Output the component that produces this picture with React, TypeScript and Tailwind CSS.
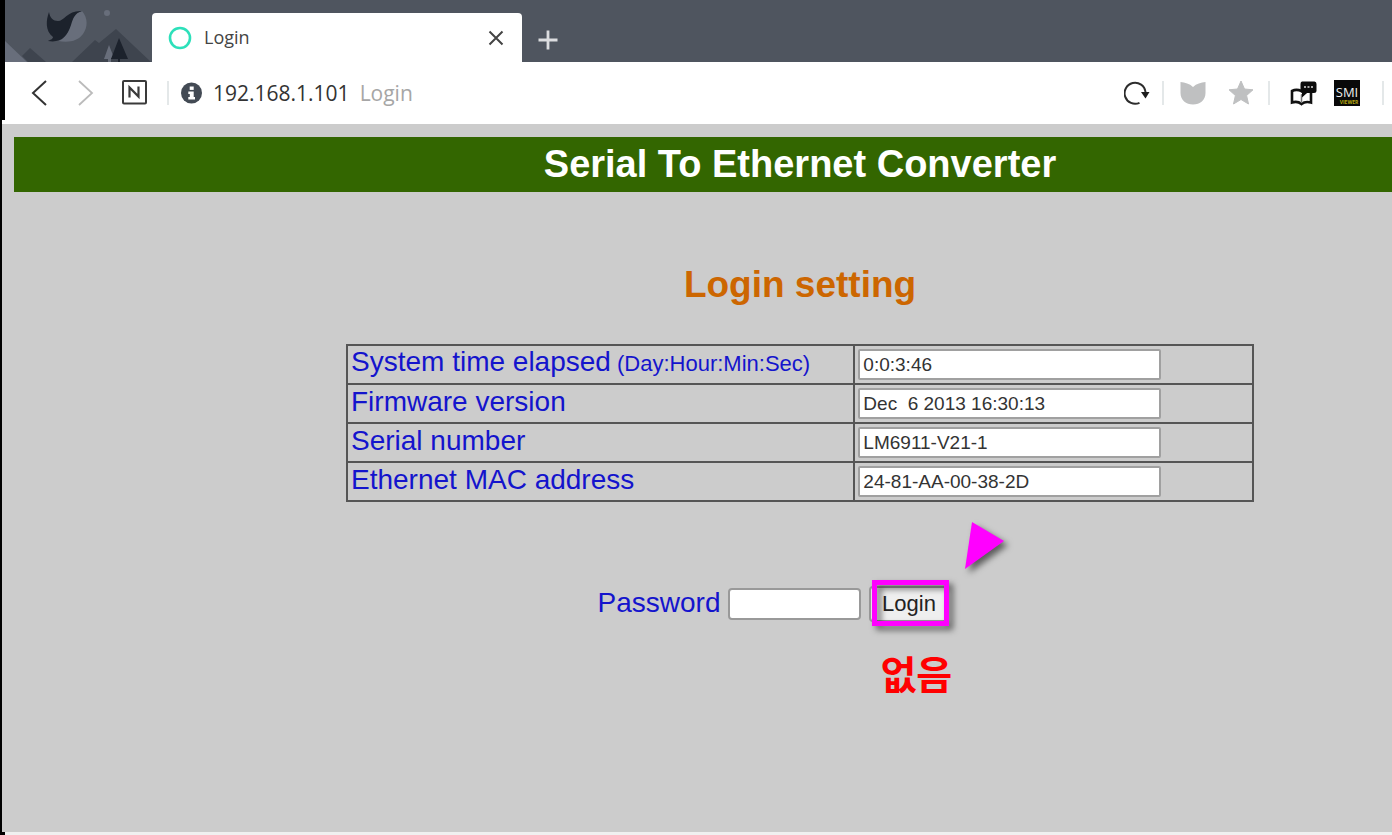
import React, { useState } from 'react';

interface InfoRow {
  id: string;
  label: string;
  hint?: string;
  value: string;
}

const INFO_ROWS: InfoRow[] = [
  { id: 'elapsed', label: 'System time elapsed', hint: '(Day:Hour:Min:Sec)', value: '0:0:3:46' },
  { id: 'firmware', label: 'Firmware version', value: 'Dec  6 2013 16:30:13' },
  { id: 'serial', label: 'Serial number', value: 'LM6911-V21-1' },
  { id: 'mac', label: 'Ethernet MAC address', value: '24-81-AA-00-38-2D' },
];

const Divider = () => <span className="h-6 w-0.5 shrink-0 bg-[#e4e8e9]" />;

// Whale browser skin shown left of the first tab
const SkinArt = () => (
  <svg className="h-full w-[147px] shrink-0" viewBox="5 0 147 62" aria-hidden="true">
    <path d="M5 41 L27 62 H5Z" fill="#686e7b" />
    <path d="M22 56 L30 48 L46 62 H28Z" fill="#3e444e" />
    <path d="M72 62 L95 40 L99 43 L116 29 L151 62Z" fill="#3e444e" />
    <circle cx="107" cy="13" r="3" fill="#686e7b" />
    <path d="M82 11 C88 18 88 27 83 34 C78 41 69 43 58 41 C66 39 69 29 72 21 C74 15 77 12 82 11Z" fill="#686e7b" />
    <path d="M49 12 C50 18 53 21 58 21 C64 21 68 10 82 11 C75 13 73 18 71 25 C67 37 61 43 48 41 C50 40 53 39 53 37 C45 31 46 20 49 12Z" fill="#1c222c" />
    <path d="M109 45 L114 58 H111 V62 H108 V59 H104Z" fill="#686e7b" />
    <path d="M119 38 L128 59 H120 V62 H118 V59 H111Z" fill="#1c222c" />
  </svg>
);

const TabStrip = () => (
  <div className="flex h-[62px] items-end border-l-[5px] border-black bg-[#4f555f]">
    <SkinArt />
    <div className="flex h-[49px] w-[370px] items-center rounded-t bg-white pr-4 pl-4">
      <svg className="h-6 w-6" viewBox="0 0 24 24" fill="none" stroke="#2de0ba" strokeWidth="2.6" aria-hidden="true">
        <circle cx="12" cy="12" r="10" />
      </svg>
      <span className="ml-3 flex-1 text-[18px] text-[#444]">Login</span>
      <button type="button" aria-label="Close tab" className="flex h-5 w-5 items-center justify-center">
        <svg className="h-4 w-4" viewBox="0 0 16 16" stroke="#444" strokeWidth="2" aria-hidden="true">
          <path d="M1.5 1.5 L14.5 14.5 M14.5 1.5 L1.5 14.5" />
        </svg>
      </button>
    </div>
    <button type="button" aria-label="New tab" className="mb-3 ml-4 flex h-5 w-5 items-center justify-center">
      <svg className="h-5 w-5" viewBox="0 0 20 20" stroke="#dcdde0" strokeWidth="2.8" aria-hidden="true">
        <path d="M10 .5 V19.5 M.5 10 H19.5" />
      </svg>
    </button>
  </div>
);

const Toolbar = () => (
  <div className="flex h-[58px] items-center border-l-[5px] border-black bg-white pt-1 pr-2">
    <button type="button" aria-label="Back" className="ml-6">
      <svg className="h-7 w-5" viewBox="0 0 20 28" fill="none" stroke="#333" strokeWidth="2" aria-hidden="true">
        <path d="M17 2 L4 14 L17 26" />
      </svg>
    </button>
    <button type="button" aria-label="Forward" className="ml-7">
      <svg className="h-7 w-5" viewBox="0 0 20 28" fill="none" stroke="#bbb" strokeWidth="1.8" aria-hidden="true">
        <path d="M2 2 L15 14 L2 26" />
      </svg>
    </button>
    <button type="button" aria-label="Home" className="ml-6">
      <svg className="h-[26px] w-[26px]" viewBox="0 0 26 26" fill="none" stroke="#3a3a3a" strokeWidth="2" aria-hidden="true">
        <rect x="2" y="1" width="23" height="22.5" rx="1" />
        <path d="M8.5 17.5 V7.5 L17.5 16.5 V6.5" strokeWidth="2.2" />
      </svg>
    </button>
    <div className="ml-5 flex min-w-0 flex-1 items-center">
      <Divider />
      <svg className="ml-3 h-[22px] w-[22px]" viewBox="0 0 22 22" aria-hidden="true">
        <circle cx="10.5" cy="11" r="10.5" fill="#434a54" />
        <rect x="8.7" y="4.5" width="4" height="3.4" fill="#fff" />
        <path d="M7.3 9.5 H12.7 V15 H14 V17.5 H7.3 V15 H8.8 V12 H7.3Z" fill="#fff" />
      </svg>
      <div className="ml-2.5 flex gap-2.5 pt-0.5 text-[21px]">
        <span className="text-[#333]">192.168.1.101</span>
        <span className="text-[#a6a6a6]">Login</span>
      </div>
    </div>
    <div className="flex items-center">
      <button type="button" aria-label="Reload">
        <svg className="h-[26px] w-[26px]" viewBox="0 0 26 26" fill="none" aria-hidden="true">
          <path d="M15.5 22.8 A10.5 10.5 0 1 1 21.5 12" stroke="#2d2d2d" strokeWidth="2" />
          <path d="M17 12 H25.5 L21.5 18.5Z" fill="#1d1d1d" />
        </svg>
      </button>
      <span className="ml-3 flex"><Divider /></span>
      <button type="button" aria-label="Tracking protection" className="ml-4">
        <svg className="h-[26px] w-[26px]" viewBox="0 0 26 26" fill="#bfc0c1" aria-hidden="true">
          <path d="M.5 2 C5 2.5 9.5 3.5 13 7 C16.5 3.5 21 2.5 25.5 2 V13 C25.5 20 20 24.5 13 24.5 S.5 20 .5 13Z" />
        </svg>
      </button>
      <button type="button" aria-label="Bookmark" className="ml-[22px]">
        <svg className="h-[26px] w-[26px]" viewBox="0 0 26 26" fill="#bfc0c1" stroke="#bfc0c1" strokeLinejoin="round" aria-hidden="true">
          <path d="M13 1 L16.5 9 L25 9.8 L18.6 15.5 L20.5 24 L13 19.5 L5.5 24 L7.4 15.5 L1 9.8 L9.5 9Z" />
        </svg>
      </button>
      <span className="ml-3.5 flex"><Divider /></span>
      <button type="button" aria-label="Dictionary" className="ml-5">
        <svg className="h-[26px] w-[27px]" viewBox="0 0 27 26" fill="none" aria-hidden="true">
          <path d="M11.5 11 C8 9.5 5 9.5 2 11 V22.5 C5 21.5 8.5 21.5 11.5 24 C14.5 21.5 17.5 21.5 21 22.5 V13" stroke="#111" strokeWidth="2.6" />
          <path d="M11.5 23 V15 L17 12" stroke="#777" strokeWidth="1.5" />
          <path d="M12 1.5 H24.5 Q26.5 1.5 26.5 4 V11 Q26.5 13 24 13 H17 L12 17.5 V13 Q10.5 13 10.5 11 V4 Q10.5 1.5 12 1.5Z" fill="#0c0c0c" />
          <path d="M14 7 H24" stroke="#ddd" strokeWidth="1.6" strokeDasharray="2 1.5" />
        </svg>
      </button>
      <button type="button" aria-label="SMI viewer" className="ml-[17px]">
        <svg className="h-[26px] w-[26px]" viewBox="0 0 26 26" aria-hidden="true">
          <rect width="26" height="26" fill="#090909" />
          <text x="13" y="17" fontSize="13" textAnchor="middle" fill="#eee">SMI</text>
          <text x="15" y="24" fontSize="5" fontWeight="700" textAnchor="middle" fill="#b8aa10">VIEWER</text>
        </svg>
      </button>
      <span className="ml-[22px] flex"><Divider /></span>
    </div>
  </div>
);

const InfoTable = () => (
  <table className="w-full max-w-[908px] border-collapse border-2 border-[#555]">
    <tbody>
      {INFO_ROWS.map((row) => (
        <tr key={row.id} className="h-[39px]">
          <th scope="row" className="w-[56%] border-2 border-[#555] px-[3px] pt-0 pb-1 text-left text-[28px] leading-[30px] font-normal text-[#1414cc]">
            <label htmlFor={row.id}>
              {row.label}
              {row.hint && <span className="text-[22px]"> {row.hint}</span>}
            </label>
          </th>
          <td className="border-2 border-[#555] px-[3px] py-0">
            <input
              id={row.id}
              type="text"
              readOnly
              defaultValue={row.value}
              className="block h-[31px] w-[303px] rounded-xs border-2 border-[#a0a0a0] bg-white px-[3px] text-[19px] text-[#333]"
            />
          </td>
        </tr>
      ))}
    </tbody>
  </table>
);

const LoginForm = () => {
  const [password, setPassword] = useState('');

  return (
    <form className="mt-[83px] flex items-center pr-[54px]" onSubmit={(e) => e.preventDefault()}>
      <label htmlFor="password" className="pb-0.5 text-[28px] leading-9 text-[#1414cc]">Password</label>
      <input
        id="password"
        type="password"
        value={password}
        onChange={(e) => setPassword(e.target.value)}
        className="ml-2 h-8 w-[133px] rounded border-2 border-[#999] bg-white px-1 text-[19px]"
      />
      <div className="relative ml-2">
        <button type="submit" className="h-9 w-[79px] rounded border-2 border-[#999] bg-[#efefef] text-[22px] leading-8 text-[#222]">
          Login
        </button>
        {/* Callout around the button */}
        <span className="pointer-events-none absolute -top-1.5 left-[3px] h-[46px] w-[77px] border-[5px] border-[#ff00ff] drop-shadow-[4px_4px_3px_rgba(0,0,0,0.55)]" />
        <svg className="pointer-events-none absolute -top-16 left-24 h-[47px] w-[39px] overflow-visible drop-shadow-[4px_4px_3px_rgba(0,0,0,0.55)]" viewBox="0 0 39 47" aria-hidden="true">
          <path d="M7 0 L39 19 L0 47Z" fill="#ff00ff" />
        </svg>
        <span className="absolute top-[62px] left-[11px] font-['Noto_Sans_CJK_KR',sans-serif] text-[39px] leading-[48px] font-bold whitespace-nowrap text-[#ff0000]">
          없음
        </span>
      </div>
    </form>
  );
};

export default function App() {
  return (
    <div className="flex min-h-screen flex-col overflow-hidden bg-white">
      <header className="font-['Open_Sans',sans-serif]">
        <TabStrip />
        <Toolbar />
        <div className="h-1 border-l-2 border-black bg-white" />
      </header>

      <main className="flex flex-1 flex-col border-l-2 border-black bg-[#cccccc] pt-[13px] pl-3 font-['Liberation_Sans',Arial,sans-serif]">
        <h1 className="bg-[#336600] py-1 pl-[194px] text-center text-[38px] leading-[47px] font-bold text-white">
          Serial To Ethernet Converter
        </h1>
        <div className="flex flex-col items-center pl-[194px]">
          <h2 className="mt-[69px] text-[37px] leading-[48px] font-bold text-[#cc6600]">Login setting</h2>
          <div className="mt-[35px] flex w-full justify-center">
            <InfoTable />
          </div>
          <LoginForm />
        </div>
      </main>
      <div className="h-[3px] border-l-[5px] border-black bg-[#f0f0f0]" />
    </div>
  );
}
